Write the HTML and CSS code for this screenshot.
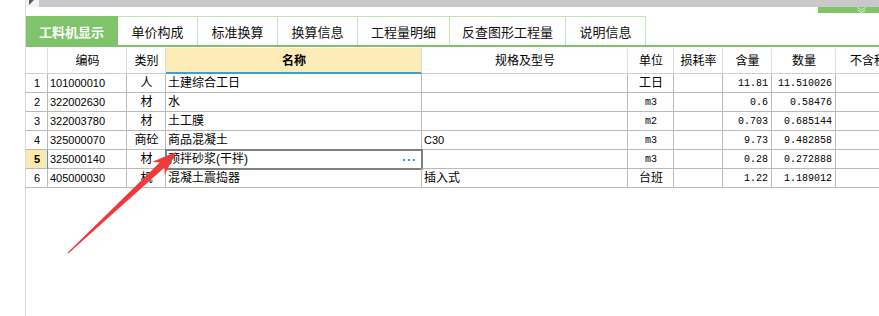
FILE: index.html
```html
<!DOCTYPE html>
<html>

<head>
    <meta charset="utf-8">
    <title>工料机显示</title>
    <link rel="stylesheet" href="styles.css">
</head>

<body>

    <div class="app">

        <div class="side"></div>

        <div class="main">

            <div class="topbar">
                <div class="scroll-btn"></div>
                <div class="track"></div>
            </div>

            <div class="subbar">
                <div class="collapse">
                    <svg width="9" height="6" viewBox="0 0 9 6">
                        <path d="M0.5 0.5 L4.5 3 L8.5 0.5 M0.5 3 L4.5 5.5 L8.5 3" fill="none" stroke="#dff2d6" stroke-width="1" />
                    </svg>
                </div>
            </div>

            <div class="tabs">
                <div class="tab active">工料机显示</div>
                <div class="tab">单价构成</div>
                <div class="tab">标准换算</div>
                <div class="tab">换算信息</div>
                <div class="tab wide">工程量明细</div>
                <div class="tab xwide">反查图形工程量</div>
                <div class="tab">说明信息</div>
            </div>

            <div class="grid">

                <div class="row head">
                    <div></div>
                    <div>编码</div>
                    <div>类别</div>
                    <div class="sorted">名称</div>
                    <div>规格及型号</div>
                    <div>单位</div>
                    <div>损耗率</div>
                    <div>含量</div>
                    <div>数量</div>
                    <div>不含税市场价</div>
                </div>

                <div class="row">
                    <div class="idx">1</div>
                    <div class="code">101000010</div>
                    <div class="mid">人</div>
                    <div>土建综合工日</div>
                    <div></div>
                    <div class="mid">工日</div>
                    <div></div>
                    <div class="num">11.81</div>
                    <div class="num">11.510026</div>
                    <div></div>
                </div>

                <div class="row">
                    <div class="idx">2</div>
                    <div class="code">322002630</div>
                    <div class="mid">材</div>
                    <div>水</div>
                    <div></div>
                    <div class="mid unit">m3</div>
                    <div></div>
                    <div class="num">0.6</div>
                    <div class="num">0.58476</div>
                    <div></div>
                </div>

                <div class="row">
                    <div class="idx">3</div>
                    <div class="code">322003780</div>
                    <div class="mid">材</div>
                    <div>土工膜</div>
                    <div></div>
                    <div class="mid unit">m2</div>
                    <div></div>
                    <div class="num">0.703</div>
                    <div class="num">0.685144</div>
                    <div></div>
                </div>

                <div class="row">
                    <div class="idx">4</div>
                    <div class="code">325000070</div>
                    <div class="mid">商砼</div>
                    <div>商品混凝土</div>
                    <div class="code">C30</div>
                    <div class="mid unit">m3</div>
                    <div></div>
                    <div class="num">9.73</div>
                    <div class="num">9.482858</div>
                    <div></div>
                </div>

                <div class="row current">
                    <div class="idx">5</div>
                    <div class="code">325000140</div>
                    <div class="mid">材</div>
                    <div class="editing">
                        <span>预拌砂浆(干拌)</span>
                        <span class="dots"><i></i><i></i><i></i></span>
                    </div>
                    <div></div>
                    <div class="mid unit">m3</div>
                    <div></div>
                    <div class="num">0.28</div>
                    <div class="num">0.272888</div>
                    <div></div>
                </div>

                <div class="row">
                    <div class="idx">6</div>
                    <div class="code">405000030</div>
                    <div class="mid">机</div>
                    <div>混凝土震捣器</div>
                    <div>插入式</div>
                    <div class="mid">台班</div>
                    <div></div>
                    <div class="num">1.22</div>
                    <div class="num">1.189012</div>
                    <div></div>
                </div>

            </div>
        </div>

        <!-- red arrow drawn over the grid -->
        <svg class="arrow" width="879" height="316" viewBox="0 0 879 316">
            <polygon fill="#ee3a3a"
                points="176,152 164.6,175 164.5,167.6 68.3,253.4 67.7,252.6 159.7,162.4 152.4,161.8" />
        </svg>

    </div>

</body>

</html>
```

FILE: styles.css
```css
* {
    box-sizing: border-box;
}

body {
    margin: 0;
    background-color: #fff;
    font-family: "Liberation Sans", "Noto Sans CJK SC", sans-serif;
    font-size: 12px;
    color: #000;
    overflow: hidden;
}

.app {
    position: relative;
    display: flex;
    height: 316px;
}

.side {
    width: 26px;
    flex-shrink: 0;
    border-right: 1px solid #dadada;
}

.main {
    flex: 1;
    min-width: 0;
    overflow: hidden;
    display: flex;
    flex-direction: column;
}

/* top scroll strip */

.topbar {
    display: flex;
    height: 7px;
}

.scroll-btn {
    position: relative;
    width: 13px;
    background-color: #f3f3f3;
}

.scroll-btn::before {
    content: "";
    position: absolute;
    left: 3px;
    top: 0;
    border-top: 5px solid #5a5a5a;
    border-right: 5px solid transparent;
}

.track {
    flex: 1;
    background-color: #c9c9c9;
}

.subbar {
    height: 9px;
    display: flex;
    justify-content: flex-end;
    align-items: flex-start;
}

.collapse {
    width: 61px;
    height: 6px;
    padding-left: 39px;
    background-color: #7fc36b;
    display: flex;
}

/* tabs */

.tabs {
    display: flex;
    height: 31px;
    border-bottom: 2px solid #7fc36b;
}

.tab {
    width: 80px;
    border-top: 1px solid #c3e6b5;
    border-right: 1px solid #c3e6b5;
    display: flex;
    align-items: center;
    justify-content: center;
    padding-top: 1px;
    font-size: 13px;
    color: #111;
}

.tab.wide {
    width: 92px;
}

.tab.xwide {
    width: 116px;
}

.tab.active {
    width: 92px;
    background-color: #7fc36b;
    border-color: #7fc36b;
    color: #fff;
    font-weight: bold;
}

/* data grid */

.grid {
    margin-top: 1px;
}

.row {
    display: grid;
    grid-template-columns: 22px 79px 39px 256px 206px 46px 49px 49px 64px 100px;
    height: 19px;
}

.row > div {
    border-right: 1px solid #b9b9b9;
    border-bottom: 1px solid #b9b9b9;
    padding: 1px 1px 0 2px;
    line-height: 17px;
    white-space: nowrap;
    overflow: hidden;
}

.row.head {
    height: 26px;
}

.row.head > div {
    border-right-color: #dcdcdc;
    border-bottom-color: #cfcfcf;
    text-align: center;
    line-height: 24px;
}

.row.head > .sorted {
    background-color: #fdebb6;
    border-bottom: 2px solid #3c9fd6;
    font-weight: bold;
}

.idx {
    text-align: center;
    font-size: 11px;
}

.code {
    font-size: 11px;
}

.mid {
    text-align: center;
}

.unit {
    font-family: "Liberation Mono", monospace;
    font-size: 10px;
}

.num {
    text-align: right;
    padding-right: 3px !important;
    font-family: "Liberation Mono", monospace;
    font-size: 10px;
}

.current .idx {
    background-color: #fde9ae;
    border-right-color: #3c9ad6;
    font-weight: bold;
}

.editing {
    display: flex;
    justify-content: space-between;
    align-items: center;
    outline: 2px solid #7f7f7f;
    outline-offset: -1px;
}

.dots {
    display: flex;
    gap: 3px;
    margin-right: 5px;
}

.dots i {
    width: 2px;
    height: 2px;
    background-color: #4f94d4;
}

.arrow {
    position: absolute;
    left: 0;
    top: 0;
    pointer-events: none;
}
```
